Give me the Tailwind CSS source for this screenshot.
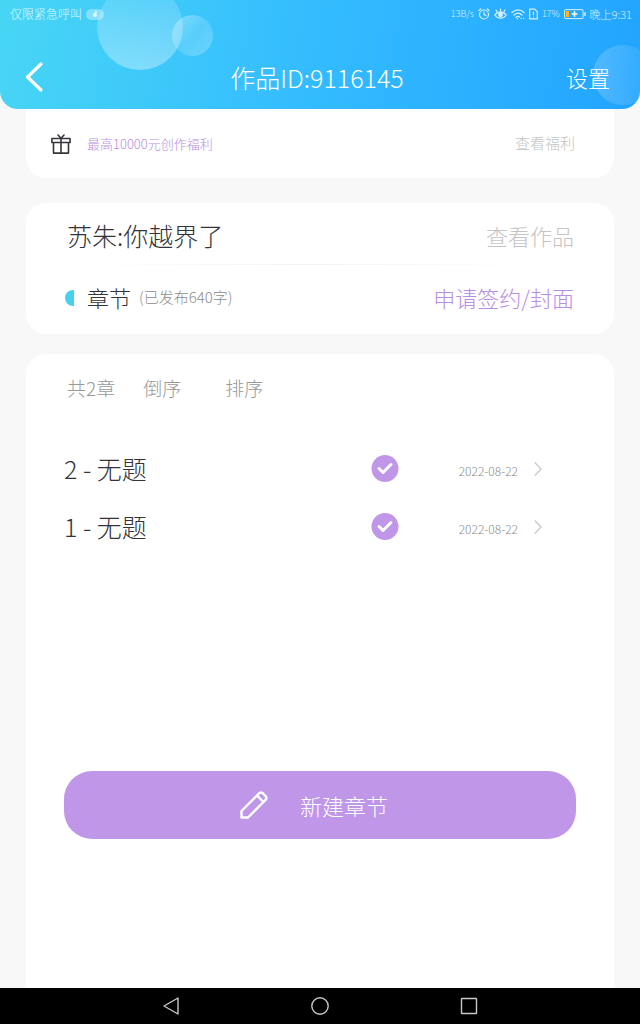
<!DOCTYPE html>
<html lang="zh-CN">
<head>
    <meta charset="UTF-8">
    <meta name="viewport" content="width=device-width, initial-scale=1.0">
    <title>作品ID:9116145</title>
    <script src="https://cdn.jsdelivr.net/npm/@tailwindcss/browser@4"></script>
</head>
<body class="min-h-screen flex flex-col bg-[#f8f8f8] font-['Noto_Sans_CJK_SC',sans-serif] font-light text-[#333338]">

    <header class="relative overflow-hidden rounded-b-[18px] bg-linear-[100deg,#48d6f5,#33bbff_50%,#22a4ff] text-white">
        <!-- bubbles -->
        <div class="absolute left-[97px] -top-4 size-[86px] rounded-full bg-linear-to-b from-white/10 to-white/35"></div>
        <div class="absolute left-[172px] top-[15px] size-[41px] rounded-full bg-linear-to-br from-white/35 via-white/15 to-white/25"></div>
        <div class="absolute -right-[13px] top-[45px] size-[60px] rounded-full bg-linear-to-r from-white/20 to-white/5"></div>

        <div class="relative h-7 pl-[10px] pr-2 flex items-center justify-between text-white/80">
            <div class="flex items-center gap-1 text-[12px]">
                <span>仅限紧急呼叫</span>
                <span class="w-[18px] h-[11px] rounded-full bg-white/35 flex items-center justify-center">
                    <svg class="size-2" viewBox="0 0 8 8" fill="currentColor"><circle cx="4" cy="5" r="2"/><circle cx="5" cy="2" r="1"/></svg>
                </span>
            </div>
            <div class="flex items-center gap-1 text-[9px]">
                <span>13B/s</span>
                <svg class="size-3" viewBox="0 0 12 12" fill="none" stroke="currentColor" stroke-width="1.2" stroke-linecap="round"><circle cx="6" cy="6.5" r="4.5"/><path d="M6 4v2.6l1.8 1M.8 2.6 2.6 1M11.2 2.6 9.4 1"/></svg>
                <svg class="w-[13px] h-3" viewBox="0 0 13 12" fill="none" stroke="currentColor" stroke-width="1.2" stroke-linecap="round"><path d="M.8 7C3.5 3.2 9.5 3.2 12.2 7C9.5 11.2 3.5 11.2 .8 7zM6.5 3V1M3 3.6 2 2M10 3.6 11 2"/><circle cx="6.5" cy="6.8" r="1.8" fill="currentColor"/></svg>
                <svg class="w-[14px] h-3" viewBox="0 0 14 12" fill="none" stroke="currentColor" stroke-width="1.3" stroke-linecap="round"><path d="M1 4.5c3.5-3.5 8.500-3.500 12 0M3 7c2.400-2.200 5.600-2.200 8 0M5 9.200c1.200-1 2.500-1 3.500-.3"/><circle cx="6.5" cy="10.8" r=".7" fill="currentColor" stroke="none"/><path d="M10 10.5h.1M12.5 10.5h.1"/></svg>
                <svg class="w-[9px] h-3" viewBox="0 0 9 12" fill="none" stroke="currentColor" stroke-width="1.2" stroke-linecap="round"><path d="M.7 1.2h5l2.600 2.600v7H.7zM4.500 4v3M4.500 9v.1"/></svg>
                <span>17%</span>
                <svg class="w-[22px] h-3" viewBox="0 0 22 12" fill="none"><rect x=".6" y="1.6" width="18.5" height="9" rx="1" stroke="currentColor"/><path d="M2 3h3v6H2z" fill="#ffb52b"/><path d="M10.5 3.2v5.6M7.7 6h5.6" stroke="#fff" stroke-width="1.6"/><path d="M21 4v4" stroke="currentColor" stroke-width="1.4"/></svg>
                <span class="text-[11px]">晚上9:31</span>
            </div>
        </div>

        <div class="relative h-[81px] pl-6 pr-[30px] pt-4 grid grid-cols-[1fr_auto_1fr] items-center">
            <button type="button" aria-label="返回" class="justify-self-start">
                <svg class="w-5 h-8" viewBox="0 0 20 32" fill="none" stroke="currentColor" stroke-width="3.2" stroke-linecap="round" stroke-linejoin="round"><path d="M17 3 3.5 16 17 29"/></svg>
            </button>
            <h1 class="text-[25px] leading-8">作品ID:9116145</h1>
            <button type="button" class="justify-self-end text-[22px] leading-8">设置</button>
        </div>
    </header>

    <main class="flex-1 flex flex-col px-[26px]">
        <section class="h-[69px] mb-[25px] pl-[25px] pr-[39px] flex items-center rounded-b-[20px] bg-white">
            <svg class="size-5" viewBox="0 0 20 20" fill="none" stroke="#36363c" stroke-width="1.6" stroke-linejoin="round" stroke-linecap="round"><path d="M.9 4.5h18.2v4H.9zM2.5 8.5v10.600h15V8.500M10 4.500v14.600M7 1l3 3.300L13 1"/></svg>
            <span class="ml-4 text-[13px] text-[#b78ee0]">最高10000元创作福利</span>
            <a href="#" class="ml-auto text-[15px] text-[#c4c4c4]">查看福利</a>
        </section>

        <section class="mb-5 pl-[41px] pr-10 rounded-[20px] bg-white">
            <div class="h-[61px] pt-1 flex items-center justify-between">
                <h2 class="text-[25px]">苏朱:你越界了</h2>
                <a href="#" class="text-[22px] text-[#c4c4c4]">查看作品</a>
            </div>
            <div class="h-px mr-10 ml-4 bg-linear-to-r from-transparent via-[#f3f3f3] to-transparent"></div>
            <div class="h-[69px] pb-1 flex items-center">
                <span class="w-[9px] h-4 -ml-[2px] rounded-l-full bg-[#47d0ee]"></span>
                <h2 class="ml-[13px] text-[22px]">章节</h2>
                <span class="ml-2 text-[15px] text-[#8c8c8c]">(已发布640字)</span>
                <a href="#" class="ml-auto text-[22px] text-[#b78ee0]">申请签约/封面</a>
            </div>
        </section>

        <section class="flex-1 px-[38px] pt-[18px] rounded-t-[20px] bg-white">
            <div class="pl-[3px] flex items-center text-[19px] leading-8 text-[#999]">
                <span>共2章</span>
                <button type="button" class="ml-7">倒序</button>
                <button type="button" class="ml-11">排序</button>
            </div>

            <ul class="mt-9">
                <li>
                    <a href="#" class="h-[58px] pr-[34px] flex items-center">
                        <span class="w-[307px] shrink text-[25px]">2 - 无题</span>
                        <svg class="size-7" viewBox="0 0 28 28"><circle cx="14" cy="13.5" r="13.5" fill="#bf96e8"/><path d="m8 13.5 4 4 8-8" fill="none" stroke="#fff" stroke-width="3" stroke-linecap="round" stroke-linejoin="round"/></svg>
                        <time datetime="2022-08-22" class="ml-auto pt-1 text-[12px] text-[#8c8c8c]">2022-08-22</time>
                        <svg class="ml-4 w-2 h-4" viewBox="0 0 8 16" fill="none" stroke="#ccc" stroke-width="1.5"><path d="m.8 1.5 6.2 6.5-6.2 6.5"/></svg>
                    </a>
                </li>
                <li>
                    <a href="#" class="h-[58px] pr-[34px] flex items-center">
                        <span class="w-[307px] shrink text-[25px]">1 - 无题</span>
                        <svg class="size-7" viewBox="0 0 28 28"><circle cx="14" cy="13.5" r="13.5" fill="#bf96e8"/><path d="m8 13.5 4 4 8-8" fill="none" stroke="#fff" stroke-width="3" stroke-linecap="round" stroke-linejoin="round"/></svg>
                        <time datetime="2022-08-22" class="ml-auto pt-1 text-[12px] text-[#8c8c8c]">2022-08-22</time>
                        <svg class="ml-4 w-2 h-4" viewBox="0 0 8 16" fill="none" stroke="#ccc" stroke-width="1.5"><path d="m.8 1.5 6.2 6.5-6.2 6.5"/></svg>
                    </a>
                </li>
            </ul>

            <button type="button" class="mt-[215px] w-full h-[68px] pr-3 rounded-[28px] bg-[#bf96e8] flex items-center justify-center gap-8 text-white text-[22px]">
                <svg class="size-7" viewBox="0 0 28 28" fill="none" stroke="currentColor" stroke-width="2.4" stroke-linejoin="round"><path d="M1.500 26.500v-6.500L19.300 2.200q1.700-1.400 3.400 0l3.100 3.100q1.400 1.700 0 3.400L8 26.500zM17 4.500l6.500 6.500"/></svg>
                <span>新建章节</span>
            </button>
        </section>
    </main>

    <!-- android nav -->
    <nav class="h-9 px-24 grid grid-cols-3 justify-items-center items-center bg-black text-[#c8c8c8]">
        <button type="button" aria-label="返回"><svg class="size-5" viewBox="0 0 20 20" fill="none" stroke="currentColor" stroke-width="1.4" stroke-linejoin="round"><path d="M17 2v16L3 10z"/></svg></button>
        <button type="button" aria-label="主页"><svg class="size-5" viewBox="0 0 20 20" fill="none" stroke="currentColor" stroke-width="1.4"><circle cx="10" cy="10" r="8.2"/></svg></button>
        <button type="button" aria-label="最近任务"><svg class="size-5" viewBox="0 0 20 20" fill="none" stroke="currentColor" stroke-width="1.4"><rect x="2.5" y="2.5" width="15" height="15" rx=".5"/></svg></button>
    </nav>
</body>
</html>
